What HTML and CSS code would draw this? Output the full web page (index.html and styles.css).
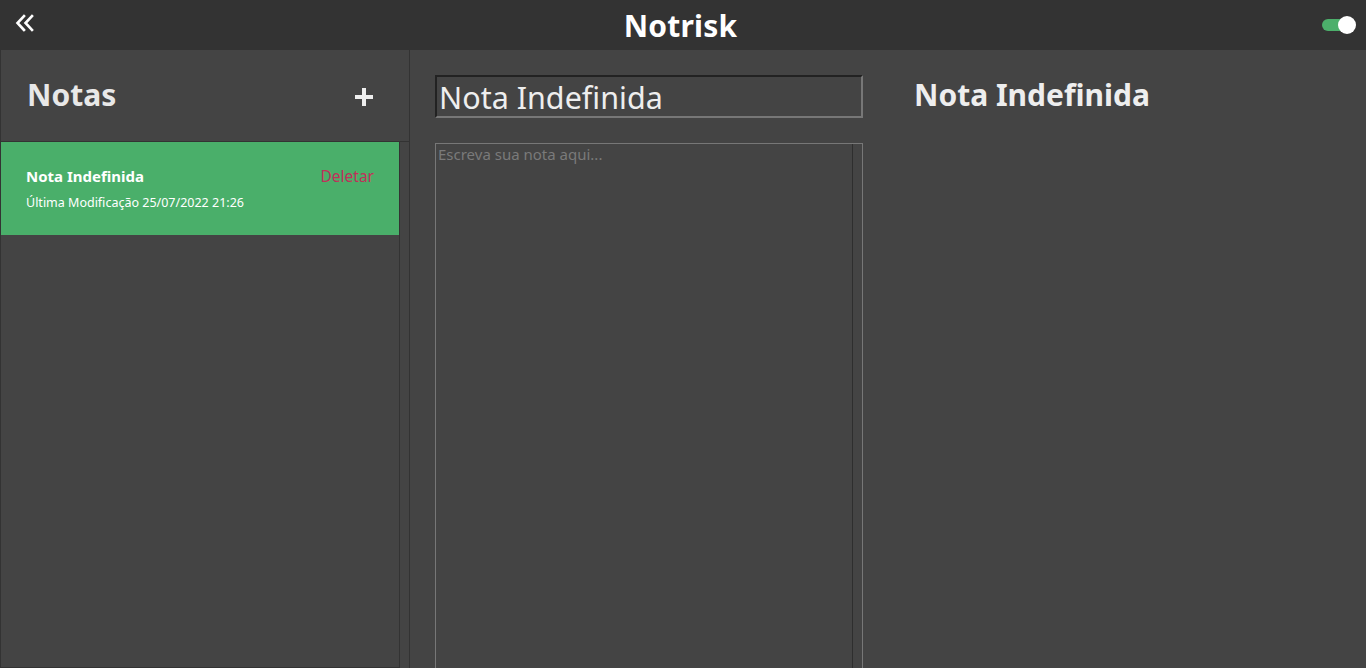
FILE: index.html
```html
<!DOCTYPE html>
<html lang="pt-BR">
<head>
<meta charset="utf-8">
<title>Notrisk</title>
<link rel="stylesheet" href="styles.css">
</head>
<body>
<header class="topbar">
  <button class="icon-btn back" aria-label="Recolher">
    <svg width="20" height="18" viewBox="0 0 20 18"><path d="M9 2 L2.5 9 L9 16 M17 2 L10.5 9 L17 16" fill="none" stroke="#fff" stroke-width="2.6" stroke-linecap="square" stroke-linejoin="miter"/></svg>
  </button>
  <h1 class="brand">Notrisk</h1>
  <div class="toggle"><span class="track"></span><span class="knob"></span></div>
</header>
<main class="layout">
  <aside class="sidebar">
    <div class="sidebar-head">
      <h2 class="sidebar-title">Notas</h2>
      <button class="icon-btn add" aria-label="Nova nota">
        <svg width="20" height="20" viewBox="0 0 20 20"><path d="M10 1 V19 M1 10 H19" stroke="#eee" stroke-width="4"/></svg>
      </button>
    </div>
    <div class="note-list">
      <div class="note-item">
        <div class="note-row">
          <span class="note-name">Nota Indefinida</span>
          <span class="note-delete">Deletar</span>
        </div>
        <div class="note-date">Última Modificação 25/07/2022 21:26</div>
      </div>
    </div>
  </aside>
  <section class="editor">
    <input class="title-input" type="text" value="Nota Indefinida">
    <div class="body-box">
      <textarea class="body-input" placeholder="Escreva sua nota aqui..."></textarea>
      <div class="scroll-track"></div>
    </div>
  </section>
  <section class="preview">
    <h2 class="preview-title">Nota Indefinida</h2>
  </section>
</main>
</body>
</html>
```
FILE: styles.css
```css
* { box-sizing: border-box; }
html, body {
  margin: 0;
  height: 100%;
  overflow: hidden;
}
body {
  background: #444444;
  font-family: "Noto Sans", "Open Sans", sans-serif;
  color: #ececec;
}
.topbar {
  height: 50px;
  background: #333333;
  display: flex;
  align-items: center;
  justify-content: space-between;
  padding: 0 10px 0 15px;
}
.icon-btn {
  background: none;
  border: none;
  padding: 0;
  display: flex;
  cursor: pointer;
}
.back { margin-top: -4px; }
.brand {
  margin: 0 0 0 6px;
  font-size: 30px;
  font-weight: 700;
  color: #ffffff;
  letter-spacing: 0.2px;
}
.toggle {
  width: 36px;
  height: 20px;
  position: relative;
}
.track {
  position: absolute;
  left: 2px;
  top: 4px;
  width: 26px;
  height: 12px;
  border-radius: 6px;
  background: #4caf6b;
}
.knob {
  position: absolute;
  right: 0;
  top: 1px;
  width: 18px;
  height: 18px;
  border-radius: 50%;
  background: #ffffff;
}
.layout {
  display: flex;
  height: 618px;
}
.sidebar {
  width: 410px;
  flex: none;
  border-right: 1px solid #333333;
  display: flex;
  flex-direction: column;
}
.sidebar-head {
  height: 92px;
  border-left: 1px solid #333333;
  border-bottom: 1px solid #333333;
  display: flex;
  align-items: center;
  justify-content: space-between;
  padding: 0 35px 0 26px;
}
.sidebar-title {
  margin: 0;
  font-size: 30px;
  font-weight: 700;
  color: #e8e8e8;
  padding-bottom: 2px;
}
.add { margin-top: 2px; }
.note-list {
  width: 400px;
  flex: 1;
  border-left: 1px solid #333333;
  border-right: 1px solid #333333;
  border-bottom: 1px solid #333333;
}
.note-item {
  height: 93px;
  background: #4aaf6a;
  padding: 23px 25px 0 25px;
}
.note-row {
  display: flex;
  justify-content: space-between;
  align-items: baseline;
}
.note-name {
  font-size: 15px;
  font-weight: 700;
  color: #ffffff;
}
.note-delete {
  font-size: 15.5px;
  color: #c0305a;
}
.note-date {
  font-size: 12.5px;
  color: #ffffff;
  margin-top: 7px;
}
.editor {
  width: 478px;
  flex: none;
  padding: 25px 25px 0 25px;
  display: flex;
  flex-direction: column;
  gap: 25px;
  overflow: hidden;
}
.title-input {
  flex: none;
  width: 428px;
  height: 43px;
  background: #444444;
  border: 2px solid;
  border-color: #222222 #777777 #777777 #222222;
  color: #eeeeee;
  font-family: "Noto Sans", "Open Sans", sans-serif;
  font-size: 30.5px;
  padding: 0 2px;
  outline: none;
}
.body-box {
  flex: none;
  width: 428px;
  height: 600px;
  border: 1px solid #777777;
  display: flex;
}
.body-input {
  flex: 1;
  background: #444444;
  border: none;
  resize: none;
  outline: none;
  color: #eeeeee;
  font-family: "Noto Sans", "Open Sans", sans-serif;
  font-size: 15px;
  padding: 0 2px;
}
.body-input::placeholder { color: #7a7a7a; }
.scroll-track {
  width: 10px;
  border-left: 1px solid #2e2e2e;
  background: #444444;
}
.preview {
  flex: 1;
  padding: 24px 0 0 26px;
}
.preview-title {
  margin: 0;
  font-size: 30px;
  font-weight: 700;
  color: #eeeeee;
}
```
